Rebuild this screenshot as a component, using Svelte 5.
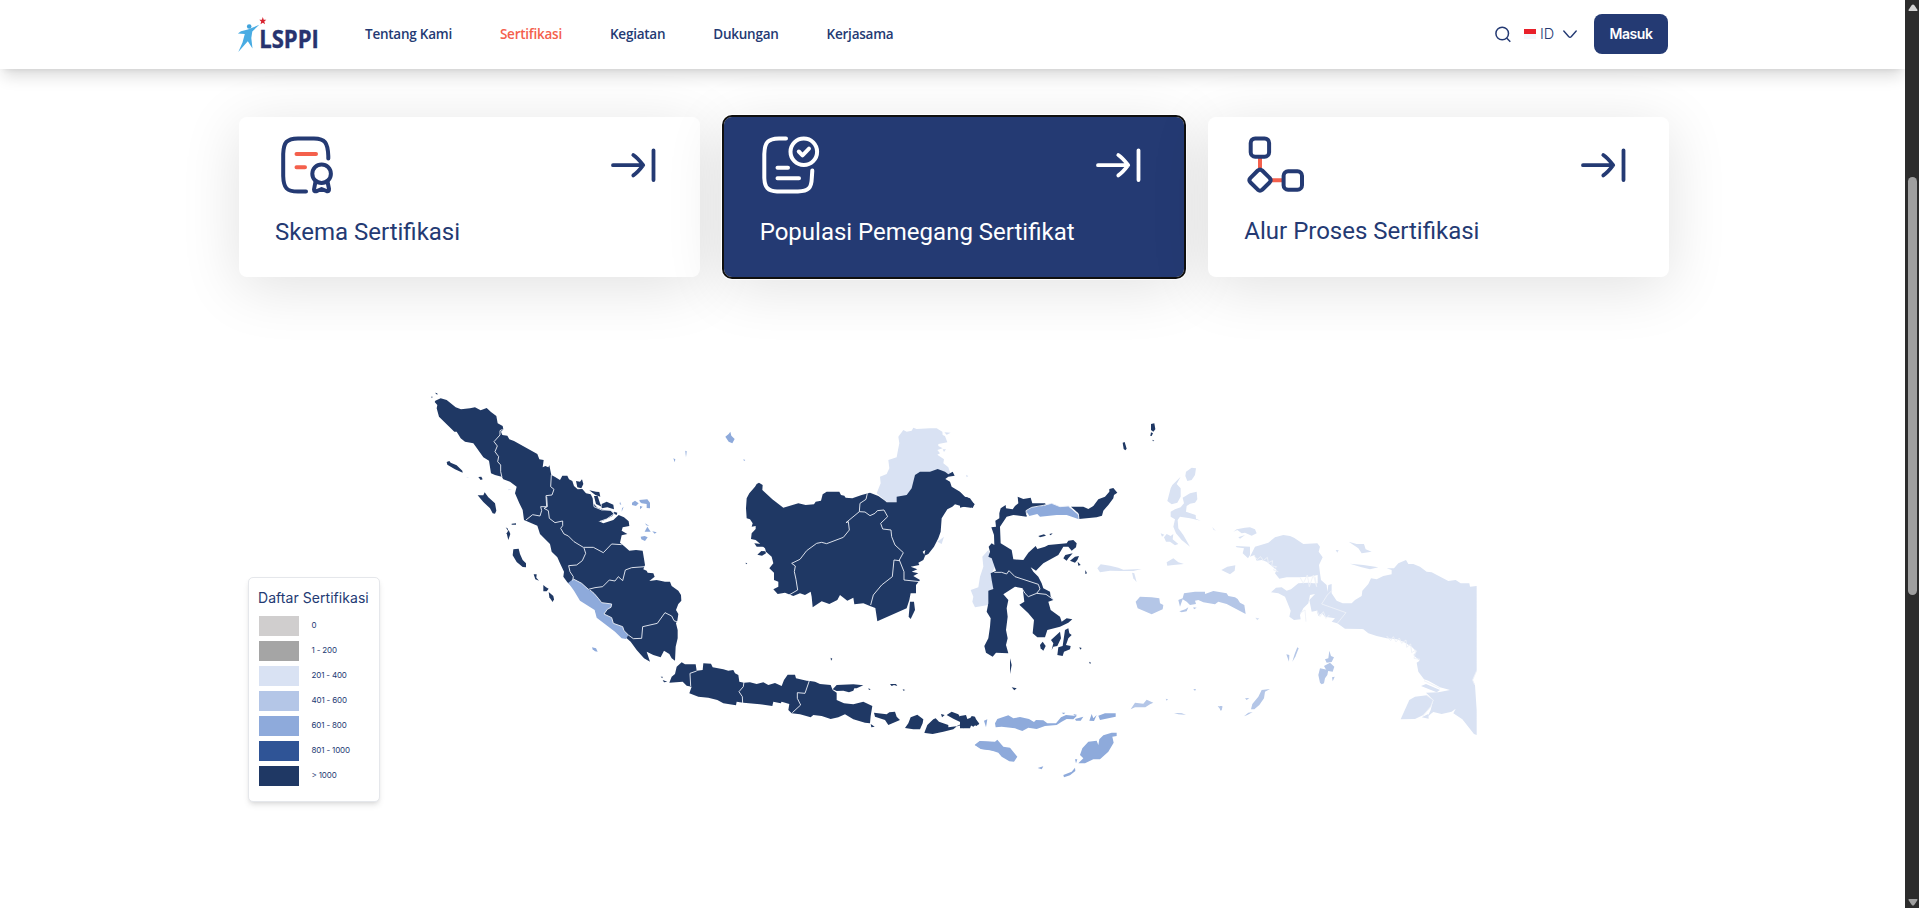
<script>
  const nav = ['Tentang Kami', 'Sertifikasi', 'Kegiatan', 'Dukungan', 'Kerjasama'];
  const legend = [
    ['#d0cece', '0'],
    ['#a5a5a5', '1 - 200'],
    ['#d9e2f3', '201 - 400'],
    ['#b4c6e7', '401 - 600'],
    ['#8eaadb', '601 - 800'],
    ['#2f5496', '801 - 1000'],
    ['#1f3864', '> 1000']
  ];
  const cards = [
    { id: 'skema', title: 'Skema Sertifikasi' },
    { id: 'populasi', title: 'Populasi Pemegang Sertifikat' },
    { id: 'alur', title: 'Alur Proses Sertifikasi' }
  ];
  const D = '#1f3864', L = '#d9e2f3', M = '#b4c6e7', N = '#8eaadb';

  // Each group has its own origin; polygons are in thirds of a pixel.
  const groups = [
    {
      at: '420 380',
      shapes: [
        [D, '46,62 62,55 80,60 95,72 107,82 123,88 150,85 165,82 182,91 200,84 213,96 229,108 233,130 248,138 250,148 243,155 247,165 262,167 268,178 282,183 352,222 358,238 371,240 368,262 376,258 385,262 388,256 394,285 404,290 420,300 427,287 442,287 447,298 457,303 462,318 473,328 487,327 498,340 512,343 518,355 520,370 532,383 548,389 572,392 583,400 577,408 560,417 545,424 535,423 550,430 580,420 596,405 612,412 626,424 628,438 608,442 605,452 622,462 605,466 600,488 612,498 628,512 648,510 668,512 675,555 670,568 680,572 683,578 700,580 704,590 688,603 710,600 735,605 750,605 755,618 775,632 783,645 784,662 775,672 768,690 775,702 772,722 768,730 773,750 773,775 767,800 765,842 755,835 748,822 732,812 722,832 700,825 680,815 690,845 672,835 650,810 632,785 620,775 605,765 530,705 524,685 480,655 462,625 442,607 430,590 432,575 420,550 412,532 395,515 390,492 360,462 352,437 312,420 308,390 298,370 285,340 290,320 270,305 250,298 245,290 225,285 213,280 207,242 190,232 160,190 135,185 122,175 110,155 103,155 57,110 50,85 52,75 44,66'],
        [N, '445,608 460,597 485,610 505,628 522,640 535,655 545,668 575,672 573,682 562,688 552,702 575,713 580,730 608,740 612,752 625,765 618,777 605,775 585,755 530,713 524,690 480,662 462,632'],
        [D, '468,303 480,305 486,298 490,312 484,325 472,322'],
        [D, '508,331 528,335 538,336 541,350 526,345'],
        [D, '522,348 533,348 540,370 545,380 528,372'],
        [D, '545,372 560,365 580,374 582,388 562,382 545,385'],
        [D, '582,395 592,398 590,405 583,402'],
        [D, '80,246 88,243 92,248 110,256 127,272 128,278 105,268 82,254'],
        [D, '173,346 190,346 194,337 205,352 225,370 229,392 225,401 218,400 210,385 190,366'],
        [D, '280,508 296,506 300,522 308,540 318,550 318,562 308,561 290,546 278,526'],
        [D, '260,460 266,450 271,462 265,480'],
        [D, '257,442 264,446 264,452'],
        [D, '275,431 288,430 288,434 275,434'],
        [D, '341,583 350,583 349,593 357,602 346,598'],
        [D, '370,615 378,622 386,626 380,634 370,634'],
        [D, '386,636 400,648 402,658 398,666 388,652'],
        [D, '175,291 184,290 188,298 182,300'],
        [D, '33,50 38,50 36,54'],
        [D, '45,38 52,40 52,45'],
        [L, '264,327 276,328 266,331'],
        [N, '516,802 528,805 533,815 525,814 518,808'],
        [N, '636,368 645,362 656,370 648,378 636,375'],
        [N, '658,360 682,358 690,368 690,385 680,384 680,372 665,370 660,366'],
        [N, '660,378 668,380 660,388'],
        [N, '674,455 682,440 692,455'],
        [N, '675,430 688,438 679,436'],
        [N, '697,454 710,457 704,461'],
        [N, '662,470 674,468 683,472 675,483 664,478'],
        [N, '600,365 604,375 599,372'],
        [N, '606,385 611,380 605,395'],
        [N, '760,235 766,238 764,247'],
        [N, '796,212 800,214 798,232'],
        [D, '722,890 728,890 727,895'],
        [L, '139,290 148,294 141,293']
      ],
      borders: [
        '248,148 240,152 240,165 222,185 232,198 225,215 236,230 233,245 242,255 242,275 246,292',
        '394,285 392,320 402,328 396,345 378,347 380,380 362,380 365,392 360,408 338,404 318,420',
        '380,350 382,380 372,385 385,392 388,415 405,428 428,423 428,437 422,445 432,462 445,468 462,485 490,502 520,502 550,518 575,492 605,494',
        '492,504 497,520 487,542 470,555 446,557 450,575 460,590 458,602',
        '460,597 485,610 505,628 525,623 548,620 568,600 585,603 595,590 608,602 616,570 635,563 675,560',
        '510,630 522,640 535,655 545,668 575,672 573,682 562,688 552,702 575,713 580,730 608,740 612,752 625,765 640,776 665,775 668,740 712,730 735,698 755,708 762,722 772,726',
        '520,362 522,380 545,390 572,390 582,402 560,417 540,424'
      ]
    },
    {
      at: '640 380',
      shapes: [
        [L, '710,340 722,310 720,290 740,282 748,265 745,240 770,232 774,210 778,190 775,170 790,150 800,155 815,152 820,143 830,147 870,145 890,145 907,155 908,165 915,168 922,187 895,192 895,198 908,205 892,210 900,220 892,224 912,238 910,250 925,262 933,285 893,272 870,280 830,290 815,330 800,350 772,352 770,367 740,365'],
        [L, '913,157 932,158 920,164'],
        [L, '908,208 918,208 912,216'],
        [L, '978,284 985,288 980,292'],
        [D, '320,355 328,340 345,320 350,312 357,308 368,315 367,330 397,358 430,383 475,370 497,375 522,373 527,365 543,362 548,343 560,335 598,335 603,345 613,347 617,353 637,355 665,345 690,338 715,348 735,362 740,367 770,367 770,350 800,345 815,325 825,285 840,275 870,275 893,267 915,275 925,283 938,275 944,287 925,290 916,297 930,305 935,320 960,335 975,350 990,355 1003,373 992,383 970,380 945,373 937,380 922,388 905,415 902,455 895,475 882,500 865,522 852,528 856,510 848,515 855,528 850,540 835,548 838,555 812,560 832,568 815,575 835,580 820,588 840,600 828,615 828,640 812,640 808,660 800,685 712,724 706,684 690,678 670,670 643,673 640,653 622,662 600,645 592,660 568,672 545,664 518,682 515,650 512,635 495,645 480,640 460,648 435,638 413,642 400,628 415,620 415,605 402,600 402,578 388,565 400,550 395,530 378,515 375,505 355,487 347,480 333,477 335,460 347,447 347,438 335,440 338,430 330,418 320,415 318,385'],
        [D, '352,524 364,513 376,514 378,520 366,527'],
        [D, '343,490 365,492 372,500 350,500'],
        [D, '806,710 810,665 822,665 825,690 812,717'],
        [D, '317,548 322,550 318,553'],
        [D, '572,833 577,836 573,842'],
        [L, '892,485 912,470 905,492'],
        [D, '88,908 95,890 105,882 110,860 125,847 135,853 167,853 170,872 188,870 190,850 213,851 218,862 250,868 265,872 280,870 285,880 295,885 298,905 312,908 330,907 350,912 370,907 385,915 405,909 425,918 432,900 443,884 465,884 468,895 500,902 510,903 525,905 540,912 572,915 578,930 590,938 590,960 612,970 640,973 670,965 697,978 692,1008 690,1030 675,1028 640,1018 615,1003 595,1012 572,1017 545,1008 520,1005 512,1012 480,1003 455,1000 445,990 448,972 425,965 422,970 400,965 397,978 360,973 310,968 290,965 288,976 250,970 232,960 205,953 175,950 148,940 155,920 140,917 128,905'],
        [D, '578,928 590,915 640,913 670,916 650,925 643,925 640,932 627,937 610,932 590,933'],
        [D, '702,998 740,1003 748,997 765,995 770,1010 780,1020 745,1035 735,1020 705,1010'],
        [D, '692,1032 704,1040 694,1042'],
        [D, '805,1030 812,1012 832,1004 850,1018 848,1030 840,1048 820,1048 795,1044'],
        [D, '853,1058 862,1035 880,1018 887,1015 897,1025 925,1035 925,1042 955,1038 965,1028 940,1016 920,1005 935,995 955,1003 960,1010 980,1018 985,1025 995,1008 1005,1010 1012,1030 1000,1040 985,1032 972,1045 955,1035 940,1048 910,1055 878,1062 855,1059'],
        [D, '903,1002 914,1005 906,1012'],
        [D, '1010,1028 1018,1030 1014,1036'],
        [D, '750,912 768,912 772,918 762,915 755,918'],
        [D, '788,928 796,930 790,932'],
        [D, '685,925 692,928 687,930'],
        [D, '68,900 82,905 72,907'],
        [N, '256,170 266,162 271,155 274,167 284,177 277,190 266,185'],
        [N, '310,238 316,240 312,243'],
        [N, '1004,1095 1018,1084 1055,1086 1070,1100 1060,1112 1022,1107']
      ],
      borders: [
        '447,645 473,630 468,598 463,575 466,558 455,550 480,538 500,512 530,490 545,487 560,491 610,472 628,450 625,425 618,428 658,395 675,396 690,407 705,400 712,392 732,390 743,410 722,430 728,447 753,450 755,470 765,495 790,518 778,540 792,575 792,600 840,605',
        '658,395 660,370 678,358 682,340',
        '778,542 762,540 757,590 725,615 700,645 692,675',
        '152,918 150,880 170,873',
        '312,905 310,920 297,935 307,950 308,970',
        '508,902 495,940 472,938 472,955 482,975 457,998'
      ]
    },
    {
      at: '960 400',
      shapes: [
        [L, '85,450 92,470 108,495 95,520 100,565 88,575 85,615 45,622 37,605 40,590 32,570 55,562 60,530 70,500 67,470'],
        [D, '95,475 85,470 90,455 86,440 95,430 103,435 102,405 94,382 108,380 106,362 118,355 118,340 122,325 137,315 138,325 158,328 165,318 175,310 173,290 190,297 212,293 217,310 255,310 258,314 235,322 200,332 200,350 160,345 140,350 120,380 122,430 155,450 160,478 190,480 205,458 227,438 232,447 255,440 265,435 320,430 325,422 340,420 350,430 348,442 335,452 325,440 310,440 295,465 250,490 235,505 228,512 212,502 220,515 235,530 245,550 250,565 270,575 272,590 280,600 265,605 272,630 300,650 305,665 320,655 337,658 325,668 300,680 262,690 255,712 232,712 218,700 222,660 205,640 178,614 193,605 188,565 165,560 130,583 145,600 140,625 143,650 138,690 143,715 138,735 145,760 108,758 98,770 78,758 73,738 85,715 90,680 92,655 80,635 85,610 85,572 100,567 95,540 92,520 108,512'],
        [N, '198,332 215,322 250,318 275,310 300,320 325,318 355,345 357,358 320,345 290,345 240,350 232,342 208,348'],
        [D, '333,320 370,320 385,327 400,318 415,298 435,290 448,275 448,267 460,264 472,278 462,285 460,295 445,315 430,332 426,347 410,352 357,357 355,340'],
        [D, '0,282 8,290 22,292 32,305 44,312 38,324 20,318 0,323'],
        [D, '0,948 18,945 22,957 40,950 48,958 57,970 50,978 35,972 30,985 0,985'],
        [D, '275,750 280,730 273,720 300,695 303,715 292,738 280,740'],
        [D, '308,738 315,690 325,685 328,700 335,705 325,715 318,735 332,738 330,748 312,755 308,768 292,765 295,742'],
        [D, '240,735 248,725 257,738 250,752 242,745'],
        [D, '310,475 316,465 338,460 325,475 320,482'],
        [D, '330,482 345,470 357,468 352,480 345,488'],
        [D, '353,485 362,495 355,497'],
        [D, '235,408 252,403 258,407 240,412'],
        [D, '268,402 278,400 272,406'],
        [D, '150,775 155,795 150,822'],
        [D, '155,862 170,865 163,871'],
        [D, '573,72 583,70 586,88 580,95 573,90'],
        [D, '573,97 579,100 575,108 571,108'],
        [D, '577,119 583,122 579,124'],
        [D, '488,128 494,126 500,146 496,151 491,147'],
        [D, '387,785 393,788 390,792'],
        [D, '376,510 381,520 376,522'],
        [D, '358,742 365,744 361,749'],
        [L, '676,228 678,215 695,203 708,205 705,225 695,240 682,243'],
        [L, '622,303 632,265 637,255 662,230 650,252 662,265 662,290 652,308 635,313'],
        [L, '632,335 645,328 662,322 672,310 668,293 690,280 710,275 712,298 705,308 690,311 680,318 678,335 707,345 708,356 722,362 690,355 660,350 653,360 655,385 670,405 690,440 665,420 648,400 640,380 645,358 632,350'],
        [L, '612,412 620,402 632,408 640,402 638,418 655,432 645,436 630,425 618,425'],
        [L, '602,400 613,404 606,410'],
        [L, '412,505 422,493 450,497 475,503 490,509 545,507 520,513 485,513 450,512 420,517'],
        [L, '516,518 523,520 530,547 520,535'],
        [L, '620,487 640,475 655,487 672,492 640,495 622,497'],
        [L, '756,380 768,394 760,388'],
        [M, '527,605 540,590 575,592 598,595 600,610 610,615 608,628 575,643 533,625'],
        [M, '655,600 668,595 672,580 705,575 735,575 735,582 760,573 800,580 805,588 825,592 833,597 840,608 853,615 857,642 800,612 775,605 765,613 730,607 715,600 705,602 708,612 690,615 680,605 668,598 660,620'],
        [M, '658,634 676,628 685,622 680,634 665,637'],
        [M, '700,622 710,623 702,628'],
        [M, '512,928 525,908 550,911 560,899 580,908 570,913 556,922 525,922'],
        [M, '642,939 665,940 678,944 655,943'],
        [M, '773,918 787,920 784,932'],
        [M, '700,867 708,867 705,873'],
        [M, '617,896 624,898 620,902'],
        [N, '105,970 112,957 145,946 160,955 180,951 207,957 222,966 228,960 250,961 262,970 288,970 303,952 318,945 350,948 340,958 320,957 305,965 290,975 255,978 230,987 205,983 187,993 165,985 125,980 107,982'],
        [N, '305,938 316,938 311,943'],
        [N, '345,957 370,950 362,962 348,962'],
        [N, '388,962 395,942 400,955 410,945 402,963'],
        [N, '415,947 435,940 467,940 467,950 420,960'],
        [N, '340,942 352,945 345,948'],
        [N, '72,962 82,958 78,982'],
        [N, '45,1035 60,1023 105,1025 112,1019 130,1040 150,1043 172,1070 162,1085 148,1084 125,1070 115,1058 90,1050 65,1047'],
        [N, '355,1090 370,1075 360,1065 367,1045 385,1025 410,1022 415,1035 418,1018 430,1006 455,998 470,998 470,1008 457,1010 461,1028 445,1055 420,1078 400,1078 375,1090'],
        [N, '345,1078 352,1078 348,1090'],
        [N, '310,1125 335,1115 345,1103 346,1113 330,1126 312,1132'],
        [N, '233,1104 250,1099 245,1108']
      ],
      borders: [
        '103,517 125,517 140,522 147,512 165,530 235,553 240,567 230,580 205,590 195,580 188,568',
        '230,580 258,583 282,600',
        '200,345 198,332 215,322 250,316 275,310 300,320 325,318 355,342 357,358'
      ]
    },
    {
      at: '1220 440',
      shapes: [
        [L, '103,345 90,350 105,320 145,308 165,292 190,285 210,288 222,293 250,312 292,310 300,320 296,335 308,352 297,375 300,400 303,420 320,435 322,455 325,435 335,432 335,460 350,482 368,490 395,490 405,480 425,468 427,452 445,432 453,415 470,418 490,408 515,403 515,390 500,385 522,385 535,370 558,360 565,372 580,372 600,380 620,395 635,397 685,423 707,420 722,430 748,430 750,440 770,438 770,692 758,720 765,735 770,810 770,885 762,882 727,838 700,820 707,806 695,815 665,822 640,816 632,822 622,832 632,810 640,780 625,765 618,758 655,757 690,750 660,742 625,722 612,718 595,695 590,668 599,662 580,645 590,635 575,620 550,605 530,598 500,595 470,588 445,580 430,568 425,567 375,566 352,550 335,545 345,535 315,530 305,520 295,528 290,512 275,515 268,480 285,462 270,465 265,490 250,505 240,525 242,538 222,540 208,530 212,512 203,490 195,470 175,460 153,457 168,443 185,442 200,452 213,448 235,430 265,428 280,430 293,430 293,405 270,410 235,412 200,412 178,416 165,400 170,390 155,378 140,365 125,360 110,362'],
        [L, '40,275 50,268 75,263 90,262 105,268 110,280 95,287 75,278 65,280 52,270'],
        [L, '55,292 75,285 60,296'],
        [L, '47,318 90,320 90,345 84,355 68,340 72,325 50,322'],
        [L, '386,305 410,312 432,312 437,328 455,335 425,340 415,325'],
        [L, '390,371 430,375 475,382 450,388 425,382'],
        [L, '347,330 356,330 352,338'],
        [L, '4,390 22,380 46,376 44,392 30,403'],
        [L, '603,738 618,732 660,750 650,757'],
        [L, '542,838 568,780 585,770 620,766 640,780 632,800 610,825 585,837'],
        [L, '605,832 625,822 626,836'],
        [L, '106,533 118,535 112,541'],
        [M, '300,728 295,705 300,685 325,690 322,705 315,715 312,730 305,733'],
        [M, '312,678 330,668 343,680 338,695 320,692'],
        [M, '315,658 325,655 328,632 333,648 342,652 335,666 320,668'],
        [M, '336,712 344,710 338,724'],
        [M, '232,622 236,625 226,650 217,665 224,642'],
        [M, '199,643 208,645 207,665'],
        [M, '93,808 97,792 115,770 125,750 150,747 135,755 132,775 118,795 103,808'],
        [M, '75,775 88,774 80,780'],
        [M, '72,829 85,818 98,816 82,825'],
        [M, '0,798 7,798 6,808 0,812']
      ],
      borders: [
        '335,452 322,465 305,492 378,518 352,550',
        '612,722 660,745',
        '620,766 640,780 632,800 608,828',
        '770,692 758,720 764,735',
        '100,345 112,358 122,350 130,362 142,352 145,368 158,362 155,378 170,380 160,390 175,395',
        '240,412 250,430 262,405 268,440 280,405 290,440 285,410',
        '240,520 255,510 258,545',
        '290,510 300,530 310,515 318,535 328,525',
        '500,588 512,602 520,590 528,606 538,594 545,610 558,600 560,622 572,612 575,638 588,630 582,655 600,658'
      ]
    }
  ];
</script>

{#snippet arrow()}
  <svg class="arrow" width="46" height="36" viewBox="0 0 46 36" fill="none" stroke="currentColor" stroke-width="3.800" stroke-linecap="round" stroke-linejoin="round">
    <path d="M3 18.2H33M23.300 8C27 10.500 30 14 33.200 18.200C30 22.500 27 26 23.300 28.400M43.500 3.300V33" />
  </svg>
{/snippet}

<div class="screen">
  <div class="page">
    <header>
      <svg class="logo" width="84" height="38" viewBox="0 0 84 38">
        <path d="M26.800 2 27.700 4.700 30.300 4.800 28.300 6.500 29 9.300 26.800 7.800 24.500 9.300 25.200 6.500 23.300 4.800 25.900 4.700Z" fill="#d8232f" />
        <circle cx="13.200" cy="11.500" r="2.300" fill="#3fa3dc" />
        <path d="M23.300 9.800 16.300 16.500 15.300 23 16.500 33.500 11.800 26.300 2.300 37 6.500 27.500 8.800 19 1.900 18.600 5 16.300 11.800 14.500Z" fill="#49ace3" />
        <text x="23.300" y="33" textLength="59.500" lengthAdjust="spacingAndGlyphs">LSPPI</text>
      </svg>
      <nav>
        {#each nav as item, i}
          <a class:active={i === 1} href="#top">{item}</a>
        {/each}
      </nav>
      <div class="tools">
        <svg class="search" width="16" height="17" viewBox="0 0 16 17" fill="none" stroke="#243a73" stroke-width="1.500"><circle cx="7.200" cy="7.500" r="6.300" /><path d="M11.600 12 15.300 15.700" /></svg>
        <span class="flag"></span>
        <span class="lang">ID</span>
        <svg class="chev" width="14" height="9" viewBox="0 0 14 9" fill="none" stroke="#243a73" stroke-width="1.400" stroke-linecap="round"><path d="M.8 1 5.600 6.500Q7 8 8.400 6.500L13.200 1" /></svg>
        <button class="login">Masuk</button>
      </div>
    </header>

    <section class="cards">
      {#each cards as card}
        <article class={card.id}>
          <div class="top">
            {#if card.id === 'skema'}
              <svg width="60" height="60" viewBox="0 0 60 60" fill="none" stroke="#243a73" stroke-width="4" stroke-linecap="round" stroke-linejoin="round">
                <path d="M49.300 23.500V21C48.800 7.500 46 3.500 35 3.400H19C7.500 3.500 4.600 7.500 4.200 19V41C4.600 53 7.500 56.500 19 56.600H27" />
                <path d="M17.500 19H37M17.500 32.300H26" stroke="#f4604c" />
                <circle cx="42.600" cy="38.700" r="9.300" />
                <path d="M36.500 46.500 35 54.500Q35 57 38 56L42.600 54 47.500 56Q50.300 57 50 54L48.500 46.500" />
              </svg>
            {:else if card.id === 'populasi'}
              <svg width="60" height="60" viewBox="0 0 60 60" fill="none" stroke="#fff" stroke-width="4" stroke-linecap="round" stroke-linejoin="round">
                <path d="M26 3.400H19C7.500 3.700 4.600 7.500 4.300 19V43C4.600 52.500 8 56.300 17 56.500H38C48.500 56.300 51.500 53 51.800 43L52.300 35.500" />
                <path d="M17.500 32.700H28M17.500 43.300H39M38.800 16.500 42.500 20.300 49 13.700" />
                <circle cx="43.800" cy="16.800" r="13.300" />
              </svg>
            {:else}
              <svg width="60" height="60" viewBox="0 0 60 60" fill="none" stroke="#243a73" stroke-width="4" stroke-linejoin="round">
                <path d="M16 22.500V33M27 45.300H38" stroke="#f4604c" />
                <rect x="6.700" y="3.400" width="18.400" height="18.300" rx="4.500" />
                <rect x="39.600" y="36.300" width="18.400" height="18.400" rx="4.500" />
                <path d="M13.800 35.500Q16 33.600 18.200 35.500L25.600 42.900Q27.600 45.300 25.600 47.500L18.200 54.700Q16 56.500 13.800 54.700L6.500 47.500Q4.300 45.300 6.500 42.900Z" />
              </svg>
            {/if}
            {@render arrow()}
          </div>
          <h2>{card.title}</h2>
        </article>
      {/each}
    </section>

    <section class="population">
      <aside>
        <h3>Daftar Sertifikasi</h3>
        <ul>
          {#each legend as [color, label]}
            <li><i style="background:{color}"></i><span>{label}</span></li>
          {/each}
        </ul>
      </aside>
      <svg class="map" width="1070" height="410" viewBox="420 380 1070 410">
        {#each groups as g}
          <g transform="translate({g.at}) scale(.33333)">
            {#each g.shapes as [fill, points]}
              <polygon {fill} {points} />
            {/each}
            {#each g.borders as points}
              <polyline {points} />
            {/each}
          </g>
        {/each}
      </svg>
    </section>
  </div>

  <div class="scrollbar">
    <svg width="10" height="7" viewBox="0 0 10 7"><path d="M1 7Q0 7 .8 5.600L3.800 1Q5 0 6.200 1L9.200 5.600Q10 7 9 7Z" fill="#d2d2d2" /></svg>
    <div class="thumb"></div>
    <svg class="down" width="10" height="7" viewBox="0 0 10 7"><path d="M1 0Q0 0 .8 1.400L3.800 6Q5 7 6.200 6L9.200 1.400Q10 0 9 0Z" fill="#a0a0a0" /></svg>
  </div>
</div>

<style>
  :global(body) { margin: 0; background: #fff; overflow: hidden; }
  .screen { display: flex; width: 1919px; height: 908px; overflow: hidden; }
  .page { width: 1905px; height: 908px; overflow: hidden; background: #fff; color: #243a73; }
  header {
    position: relative; z-index: 2; box-sizing: border-box; height: 69px; padding: 0 237px 1px 236px;
    display: flex; align-items: center; background: #fff;
    box-shadow: 0 10px 15px -3px rgba(0, 0, 0, .14), 0 4px 6px -4px rgba(0, 0, 0, .1);
  }
  .logo { flex: none; }
  .logo text { font: 700 24.300px "Open Sans", sans-serif; fill: #27336f; stroke: #27336f; stroke-width: .4px; }
  nav { display: flex; gap: 48px; margin: -1px 0 0 45px; }
  nav a { font: 600 13.500px/20px "Open Sans", "Noto Sans", sans-serif; letter-spacing: -.24px; color: #243a73; text-decoration: none; white-space: nowrap; }
  nav a.active { color: #f4604c; }
  .tools { margin-left: auto; display: flex; align-items: center; }
  .flag { width: 12px; height: 10px; margin-left: 13px; background: linear-gradient(#e8202a 0 50%, #f4f7fc 50%); }
  .lang { margin-left: 4px; width: 15px; font: 300 14.500px/20px Inter, sans-serif; }
  .chev { margin-left: 8px; }
  .login { width: 74px; height: 40px; margin-left: 17px; padding: 0 0 2px; border: 0; border-radius: 8px; background: #243a73; color: #fff; font: 600 14px Inter, sans-serif; letter-spacing: -.4px; }
  .cards { display: grid; grid-template-columns: repeat(3, 1fr); gap: 24px; margin: 48px 236px 0 239px; }
  article { box-sizing: border-box; height: 160px; padding: 18px 43px 0 36px; border-radius: 8px; background: #fff; box-shadow: 0 10px 60px rgba(0, 0, 0, .12); }
  .top { display: flex; justify-content: space-between; height: 60px; }
  .skema .top { padding: 0 1px 0 4px; }
  .arrow { margin-top: 12px; }
  h2 { margin: 21px 0 0; font: 400 24px/32px Roboto, sans-serif; white-space: nowrap; }
  .populasi { background: #243a73; color: #fff; outline: 2px solid #101010; box-shadow: 0 0 0 3px #fff, 0 10px 60px rgba(0, 0, 0, .12); }
  .alur h2 { margin-top: 20px; }
  .population { display: flex; margin: 103px 0 0 248px; }
  aside { box-sizing: border-box; width: 132px; height: 225px; margin-top: 197px; padding: 10px 9px; border: 1px solid #e5e7eb; border-radius: 5px; background: #fff; box-shadow: 0 4px 6px -1px rgba(0, 0, 0, .1), 0 2px 4px -2px rgba(0, 0, 0, .1); }
  h3 { margin: 0; font: 400 14px/20px Inter, sans-serif; letter-spacing: .05px; white-space: nowrap; }
  ul { display: grid; gap: 5px; margin: 8px 0 0 1px; padding: 0; list-style: none; }
  li { display: flex; height: 20px; font: 400 8px/18px Inter, sans-serif; letter-spacing: -.15px; }
  i { width: 40px; height: 20px; margin-right: 12.500px; }
  .map { margin-left: 40px; flex: none; }
  .map polygon { stroke: none; }
  .map polyline { fill: none; stroke: #eef2f8; stroke-width: 2.700; }
  .scrollbar { box-sizing: border-box; width: 14px; height: 908px; padding: 4px 2px 0 3px; background: #2c2c2c; display: flex; flex-direction: column; }
  .thumb { width: 9px; height: 418px; margin-top: 166px; border-radius: 5px; background: #9f9f9f; }
  .down { margin-top: auto; margin-bottom: 2px; }
</style>
